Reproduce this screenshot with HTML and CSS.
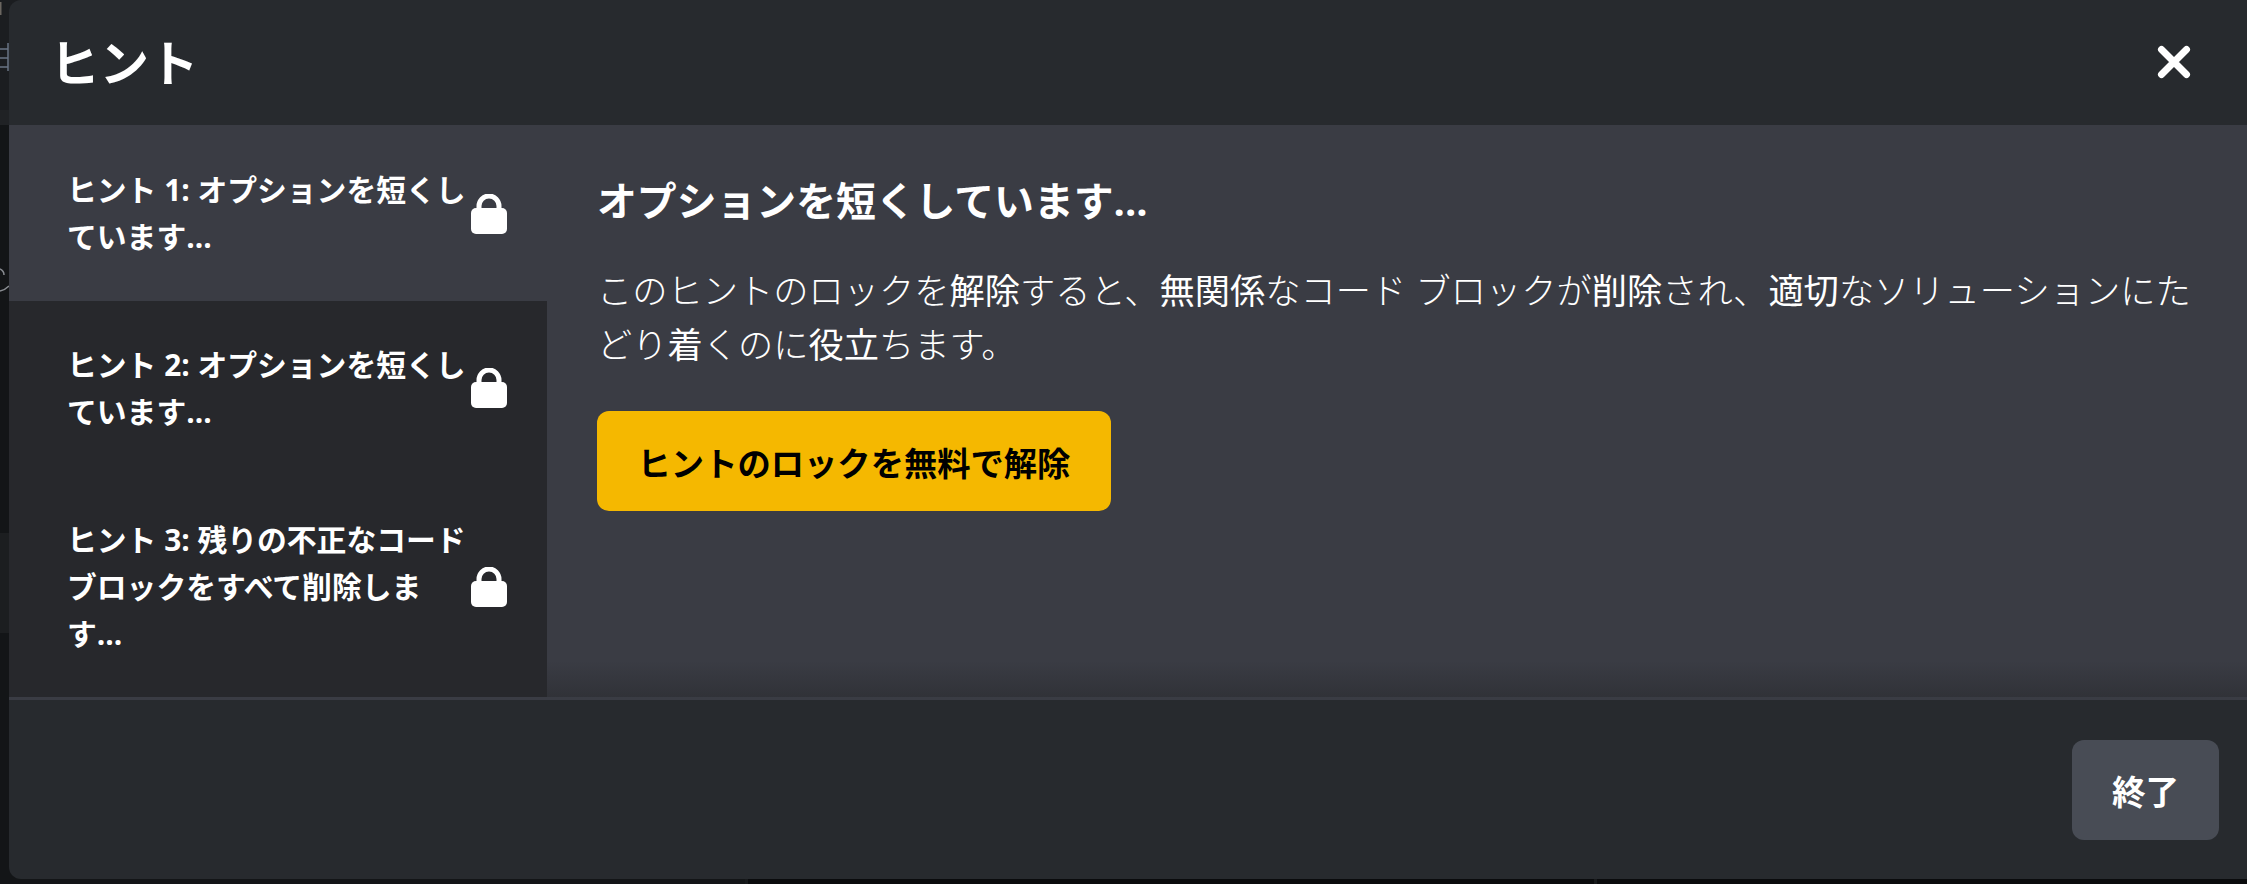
FILE: index.html
```html
<!DOCTYPE html>
<html lang="ja">
<head>
    <meta charset="UTF-8">
    <title>ヒント</title>
    <link rel="stylesheet" href="styles.css">
</head>
<body>
    <!-- page behind the dialog, only a sliver of it shows -->
    <svg class="backdrop" width="2247" height="884" viewBox="0 0 2247 884">
        <rect width="2247" height="125" fill="#1b1d20"/>
        <rect y="110" width="9" height="15" fill="#202225"/>
        <rect y="533" width="9" height="100" fill="#1c1e20"/>
        <rect x="747" y="879" width="1500" height="5" fill="#0a0b0d"/>
        <rect x="745" y="879" width="3" height="5" fill="#17191b"/>
        <rect x="1594" y="879" width="3" height="5" fill="#17191b"/>
        <path d="M0 2h1.5v13H0z" fill="#6b6660"/>
        <path d="M0 49h8M0 58h8M0 67h8M8 43v28" fill="none" stroke="#6a7484" stroke-width="1.5"/>
        <path d="M0 269q4 2 4 6M0 291q5-1 9-5" fill="none" stroke="#8a8d92" stroke-width="1.5"/>
    </svg>

    <div class="modal">
        <header class="modal-header">
            <h1>ヒント</h1>
            <button class="close-btn" aria-label="閉じる">
                <svg width="38" height="38" viewBox="0 0 38 38"><path d="M6.5 6.5l25 25M31.5 6.5l-25 25" fill="none" stroke="#fff" stroke-width="7" stroke-linecap="round"/></svg>
            </button>
        </header>

        <div class="modal-body">
            <ul class="hint-list">
                <li class="hint-item active">
                    <span class="hint-label">ヒント 1: オプションを短くしています...</span>
                    <svg class="lock" width="36" height="40" viewBox="0 0 36 40"><path d="M8 16V12a10 10 0 0 1 20 0v4" fill="none" stroke="#fff" stroke-width="5"/><rect y="14" width="36" height="26" rx="5" fill="#fff"/></svg>
                </li>
                <li class="hint-item">
                    <span class="hint-label">ヒント 2: オプションを短くしています...</span>
                    <svg class="lock" width="36" height="40" viewBox="0 0 36 40"><path d="M8 16V12a10 10 0 0 1 20 0v4" fill="none" stroke="#fff" stroke-width="5"/><rect y="14" width="36" height="26" rx="5" fill="#fff"/></svg>
                </li>
                <li class="hint-item">
                    <span class="hint-label">ヒント 3: 残りの不正なコード ブロックをすべて削除します...</span>
                    <svg class="lock" width="36" height="40" viewBox="0 0 36 40"><path d="M8 16V12a10 10 0 0 1 20 0v4" fill="none" stroke="#fff" stroke-width="5"/><rect y="14" width="36" height="26" rx="5" fill="#fff"/></svg>
                </li>
            </ul>

            <div class="hint-content">
                <h2>オプションを短くしています...</h2>
                <p>このヒントのロックを<span class="kj">解除</span>すると、<span class="kj">無関係</span>なコード ブロックが<span class="kj">削除</span>され、<span class="kj">適切</span>なソリューションにた<br>どり<span class="kj">着</span>くのに<span class="kj">役立</span>ちます。</p>
                <button class="unlock-btn">ヒントのロックを無料で解除</button>
            </div>
        </div>

        <footer class="modal-footer">
            <button class="exit-btn">終了</button>
        </footer>
    </div>
</body>
</html>
```

FILE: styles.css
```css
html, body {
    height: 100%;
}

body {
    margin: 0;
    overflow: hidden;
    background-color: #131517;
    color: white;
    font-family: "Open Sans", "Noto Sans CJK JP", sans-serif;
}

.backdrop {
    position: absolute;
    top: 0;
    left: 0;
}

.modal {
    position: relative;
    margin-left: 9px;
    height: 879px;
    display: flex;
    flex-direction: column;
    background-color: #272a2e;
    border-radius: 12px 0 0 12px;
    overflow: hidden;
}

.modal-header {
    height: 125px;
    flex-shrink: 0;
    display: flex;
    justify-content: space-between;
    align-items: center;
    padding: 0 54px 3px 41px;
    box-sizing: border-box;
}

.modal-header h1 {
    margin: 0;
    font-size: 49.5px;
    font-weight: 600;
}

.close-btn {
    padding: 0;
    border: 0;
    display: flex;
    background: none;
    position: relative;
    top: 1px;
}

.modal-body {
    flex: 1;
    min-height: 0;
    display: flex;
    position: relative;
    overflow: hidden;
    background-color: #3a3c44;
}

.modal-body::after {
    content: "";
    position: absolute;
    left: 0;
    right: 0;
    bottom: 0;
    height: 36px;
    background: linear-gradient(rgba(39, 40, 44, 0), rgba(39, 40, 44, 0.5));
}

.hint-list {
    width: 538px;
    flex-shrink: 0;
    margin: 0;
    padding: 0;
    list-style: none;
    background-color: #27282c;
}

.hint-item {
    display: flex;
    align-items: center;
    padding: 40px 40px 41px 58px;
    font-size: 29.8px;
    font-weight: 700;
    line-height: 47px;
}

.hint-item.active {
    padding-top: 41px;
    background-color: #3a3c44;
}

.hint-item.active .lock {
    margin-top: 2px;
}

.hint-label {
    width: 404px;
    flex-shrink: 0;
}

.lock {
    flex-shrink: 0;
}

.hint-content {
    flex: 1;
    padding: 51px 28px 0 50px;
}

.hint-content h2 {
    margin: 0;
    font-size: 39.85px;
    font-weight: 700;
    line-height: 50px;
}

.hint-content p {
    margin: 37px 0 0;
    font-size: 35.25px;
    font-weight: 300;
    line-height: 54px;
}

.kj {
    font-weight: 400;
}

.unlock-btn {
    display: block;
    margin-top: 40px;
    height: 100px;
    width: 514px;
    padding: 0;
    border: 0;
    border-radius: 12px;
    background-color: #f5b800;
    color: black;
    font-family: inherit;
    font-size: 33.3px;
    font-weight: 700;
}

.modal-footer {
    height: 182px;
    flex-shrink: 0;
    box-sizing: border-box;
    display: flex;
    justify-content: flex-end;
    align-items: flex-start;
    padding: 40px 28px 0 0;
    border-top: 3px solid #3a3c44;
}

.exit-btn {
    width: 147px;
    height: 100px;
    padding: 0;
    border: 0;
    border-radius: 12px;
    background-color: #484c55;
    color: white;
    font-family: inherit;
    font-size: 33.6px;
    font-weight: 700;
}
```
